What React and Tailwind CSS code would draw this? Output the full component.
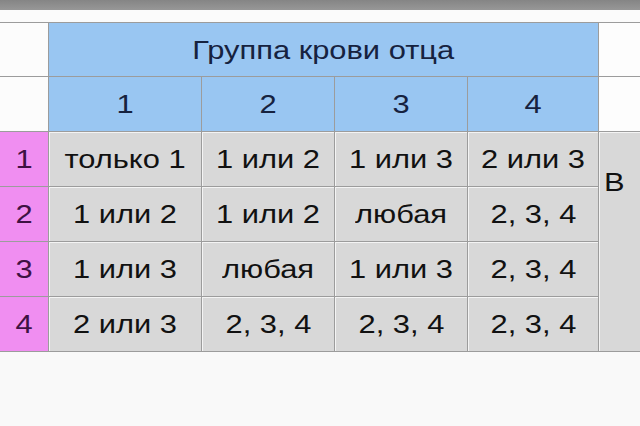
import React from "react";

const fatherGroups = ["1", "2", "3", "4"];

const rows = [
  { mother: "1", cells: ["только 1", "1 или 2", "1 или 3", "2 или 3"] },
  { mother: "2", cells: ["1 или 2", "1 или 2", "любая", "2, 3, 4"] },
  { mother: "3", cells: ["1 или 3", "любая", "1 или 3", "2, 3, 4"] },
  { mother: "4", cells: ["2 или 3", "2, 3, 4", "2, 3, 4", "2, 3, 4"] },
];

const cellBase =
  "flex items-center justify-center text-[25.5px] leading-[30px] whitespace-nowrap shadow-[inset_1px_1px_0_#f4f4f4]";

// the picture is a little wider than the font, so stretch text horizontally
const Txt = ({ children }) => (
  <span className="inline-block scale-x-[1.21]">{children}</span>
);

export default function App() {
  return (
    <div
      className="w-[640px] h-[426px] overflow-hidden bg-[#f9f9f9]"
      style={{ fontFamily: '"Liberation Sans", Arial, sans-serif' }}
    >
      {/* top strip */}
      <div className="h-[10px] bg-gradient-to-b from-[#858585] to-[#979797]" />
      <div className="h-[12px] bg-[#fbfbfb]" />

      {/* table */}
      <div className="grid grid-cols-[48px_152px_132px_132px_130px_1fr] grid-rows-[53px_54px_54px_54px_54px_54px] gap-px bg-[#9c9c9c] border-y border-[#9c9c9c]">
        {/* header row 1 */}
        <div className="bg-[#fcfcfc]" />
        <div className={`${cellBase} col-span-4 bg-[#99c6f2] text-[#16223f] shadow-none`}>
          <Txt>Группа крови отца</Txt>
        </div>
        <div className="bg-[#fdfdfd]" />

        {/* header row 2 */}
        <div className="bg-[#fcfcfc]" />
        {fatherGroups.map((g) => (
          <div key={g} className={`${cellBase} bg-[#99c6f2] text-[#16223f] shadow-none`}>
            <Txt>{g}</Txt>
          </div>
        ))}
        <div className="bg-[#fdfdfd]" />

        {/* data rows */}
        {rows.map((row, i) => (
          <React.Fragment key={row.mother}>
            <div className={`${cellBase} bg-[#f08ef1] text-[#3e1243] shadow-none`}>
              <Txt>{row.mother}</Txt>
            </div>
            {row.cells.map((c, j) => (
              <div key={j} className={`${cellBase} bg-[#d8d8d8] text-[#111]`}>
                <Txt>{c}</Txt>
              </div>
            ))}
            {i === 0 && (
              <div className="row-span-4 bg-[#d8d8d8] shadow-[inset_1px_1px_0_#f4f4f4] overflow-hidden pl-[5px] pt-[35px] text-[25.5px] leading-[30px] text-[#111] whitespace-nowrap">
                <span className="inline-block origin-left scale-x-[1.21]">В</span>
              </div>
            )}
          </React.Fragment>
        ))}
      </div>
    </div>
  );
}
